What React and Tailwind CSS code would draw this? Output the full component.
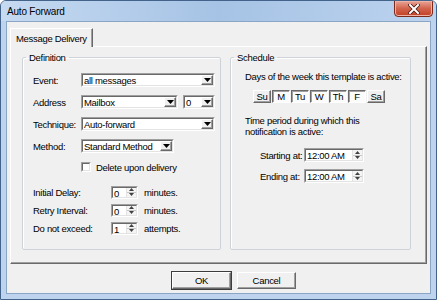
import React from 'react';

const txt = "font-['Liberation_Sans',Arial,sans-serif] text-[9.5px] leading-[11px] tracking-[-0.3px] text-black";
const sunken = 'border border-t-[#a0a0a0] border-l-[#a0a0a0] border-r-white border-b-white';
const sunkenInner = 'border border-t-[#696969] border-l-[#696969] border-r-[#e3e3e3] border-b-[#e3e3e3]';
const raised = 'border border-t-white border-l-white border-r-[#696969] border-b-[#696969] shadow-[inset_-1px_-1px_0_#a0a0a0]';
const pressed = 'border border-t-[#696969] border-l-[#696969] border-r-white border-b-white shadow-[inset_1px_1px_0_#a0a0a0]';

function Arrow({ up, big }) {
  const w = big ? 7 : 5;
  const h = big ? 4 : 3;
  return (
    <svg width={w} height={h} viewBox={`0 0 ${w} ${h}`}>
      <polygon points={up ? `0,${h} ${w},${h} ${w / 2},0` : `0,0 ${w},0 ${w / 2},${h}`} fill={big ? '#000' : '#404040'} />
    </svg>
  );
}

function Combo({ value, className }) {
  return (
    <div className={`flex h-[14px] ${sunken} ${className}`}>
      <div className={`flex flex-1 items-center bg-white ${sunkenInner}`}>
        <span className={`flex-1 overflow-hidden whitespace-nowrap pl-[1px] ${txt}`}>{value}</span>
        <div className={`flex h-full w-[12px] items-center justify-center bg-[#f0f0f0] ${raised}`}>
          <Arrow big />
        </div>
      </div>
    </div>
  );
}

function Spin({ value, className }) {
  return (
    <div className={`flex h-[13px] ${sunken} ${className}`}>
      <div className={`flex flex-1 bg-white ${sunkenInner}`}>
        <span className={`flex-1 whitespace-nowrap pl-[1px] ${txt} leading-[10px]`}>{value}</span>
        <div className="flex w-[10px] flex-col border-l border-[#e3e3e3] bg-[#f4f4f4]">
          <div className="flex flex-1 items-center justify-center border-b border-[#c8c8c8]">
            <Arrow up />
          </div>
          <div className="flex flex-1 items-center justify-center">
            <Arrow />
          </div>
        </div>
      </div>
    </div>
  );
}

function Field({ label, children }) {
  return (
    <div className="flex h-[22px] items-center">
      <span className={`w-[48px] ${txt}`}>{label}</span>
      {children}
    </div>
  );
}

function SpinRow({ label, value, unit }) {
  return (
    <div className="flex h-[18px] items-center">
      <span className={`w-[78px] ${txt}`}>{label}</span>
      <Spin value={value} className="w-[27px]" />
      <span className={`ml-[6px] ${txt}`}>{unit}</span>
    </div>
  );
}

const days = [
  ['Su', false],
  ['M', true],
  ['Tu', true],
  ['W', true],
  ['Th', true],
  ['F', true],
  ['Sa', false],
];

export default function App() {
  return (
    <div className="flex h-[300px] w-[437px] flex-col overflow-hidden rounded-t-[6px] border border-[#44638a] bg-[#bed4ee]">
      {/* Title bar */}
      <div className="flex h-[20px] items-start justify-between bg-gradient-to-r from-[#c6daf1] via-[#a6c3e5] to-[#bcd3ee] pl-[6px] pr-[3px]">
        <span className="mt-[5px] font-['Liberation_Sans',Arial,sans-serif] text-[10px] leading-[12px] tracking-[-0.2px] text-black">
          Auto Forward
        </span>
        <div className="flex h-[17px] w-[39px] -mt-px items-center justify-center rounded-b-[4px] border border-[#7b2b1c] bg-gradient-to-b from-[#e7a497] via-[#d2634c] to-[#c13f24] shadow-[inset_0_0_0_1px_#eeb3a6]">
          <svg width="12" height="10" viewBox="0 0 12 10">
            <path d="M2 1 L10 9 M10 1 L2 9" stroke="#4a1a10" strokeWidth="3.6" strokeLinecap="square" />
            <path d="M2 1 L10 9 M10 1 L2 9" stroke="#fff" strokeWidth="2" strokeLinecap="square" />
          </svg>
        </div>
      </div>

      {/* Client area */}
      <div className="mb-[5px] ml-[5px] mr-[5px] flex flex-1 flex-col border border-[#8ba6c4] bg-[#f0f0f0] pl-[3px] pr-[3px] pt-[6px]">
        {/* Tabs */}
        <div className="flex">
          <div className={`relative z-10 -mb-px flex h-[19px] w-[83px] items-start border border-b-0 border-l-white border-t-white border-r-[#696969] bg-[#f0f0f0] pl-[5px] pt-[4px] shadow-[inset_-1px_0_0_#a0a0a0] ${txt}`}>
            Message Delivery
          </div>
        </div>

        {/* Tab panel */}
        <div className="flex h-[218px] gap-[9px] border border-l-white border-t-white border-r-[#696969] border-b-[#696969] pl-[11px] pt-[5px] shadow-[inset_-1px_-1px_0_#a0a0a0]">
          {/* Definition */}
          <fieldset className="h-[198px] w-[199px] rounded-[2px] border border-[#cdd3d9] shadow-[inset_1px_1px_0_#fff]">
            <legend className={`ml-[3px] px-[3px] ${txt}`}>Definition</legend>
            <div className="flex flex-col pl-[10px] pt-[6px]">
              <Field label="Event:">
                <Combo value="all messages" className="w-[134px]" />
              </Field>
              <Field label="Address">
                <Combo value="Mailbox" className="w-[97px]" />
                <Combo value="0" className="ml-[5px] w-[32px]" />
              </Field>
              <Field label="Technique:">
                <Combo value="Auto-forward" className="w-[134px]" />
              </Field>
              <Field label="Method:">
                <Combo value="Standard Method" className="w-[93px]" />
              </Field>
              <div className="flex h-[20px] items-center pl-[48px]">
                <div className={`h-[10px] w-[10px] bg-white ${sunken}`}>
                  <div className={`h-full w-full ${sunkenInner}`} />
                </div>
                <span className={`ml-[5px] ${txt}`}>Delete upon delivery</span>
              </div>
              <div className="h-[6px]" />
              <SpinRow label="Initial Delay:" value="0" unit="minutes." />
              <SpinRow label="Retry Interval:" value="0" unit="minutes." />
              <SpinRow label="Do not exceed:" value="1" unit="attempts." />
            </div>
          </fieldset>

          {/* Schedule */}
          <fieldset className="h-[198px] w-[181px] rounded-[2px] border border-[#cdd3d9] shadow-[inset_1px_1px_0_#fff]">
            <legend className={`ml-[3px] px-[3px] ${txt}`}>Schedule</legend>
            <div className="flex flex-col pl-[14px] pt-[8px]">
              <span className={txt}>Days of the week this template is active:</span>
              <div className="ml-[8px] mt-[8px] flex gap-[1px]">
                {days.map(([d, on]) => (
                  <div
                    key={d}
                    className={`flex h-[13px] w-[18px] items-center justify-center ${on ? `bg-[#fbfbfb] ${pressed}` : `bg-[#f0f0f0] ${raised}`} ${txt} leading-[10px]`}
                  >
                    {d}
                  </div>
                ))}
              </div>
              <div className={`mt-[12px] ${txt} leading-[10px]`}>
                Time period during which this
                <br />
                notification is active:
              </div>
              <div className="ml-[15px] mt-[11px] flex items-center">
                <span className={`w-[44px] ${txt}`}>Starting at:</span>
                <Spin value="12:00 AM" className="w-[60px] h-[14px]" />
              </div>
              <div className="ml-[15px] mt-[7px] flex items-center">
                <span className={`w-[44px] ${txt}`}>Ending at:</span>
                <Spin value="12:00 AM" className="w-[60px] h-[14px]" />
              </div>
            </div>
          </fieldset>
        </div>

        {/* Buttons */}
        <div className="mt-[8px] flex gap-[6px] pl-[162px]">
          <button className={`flex h-[17px] w-[59px] items-center justify-center bg-[#f0f0f0] outline outline-1 outline-[#3c3c3c] ${raised} ${txt}`}>
            OK
          </button>
          <button className={`flex h-[17px] w-[59px] items-center justify-center bg-[#f0f0f0] ${raised} ${txt}`}>
            Cancel
          </button>
        </div>
      </div>
    </div>
  );
}
